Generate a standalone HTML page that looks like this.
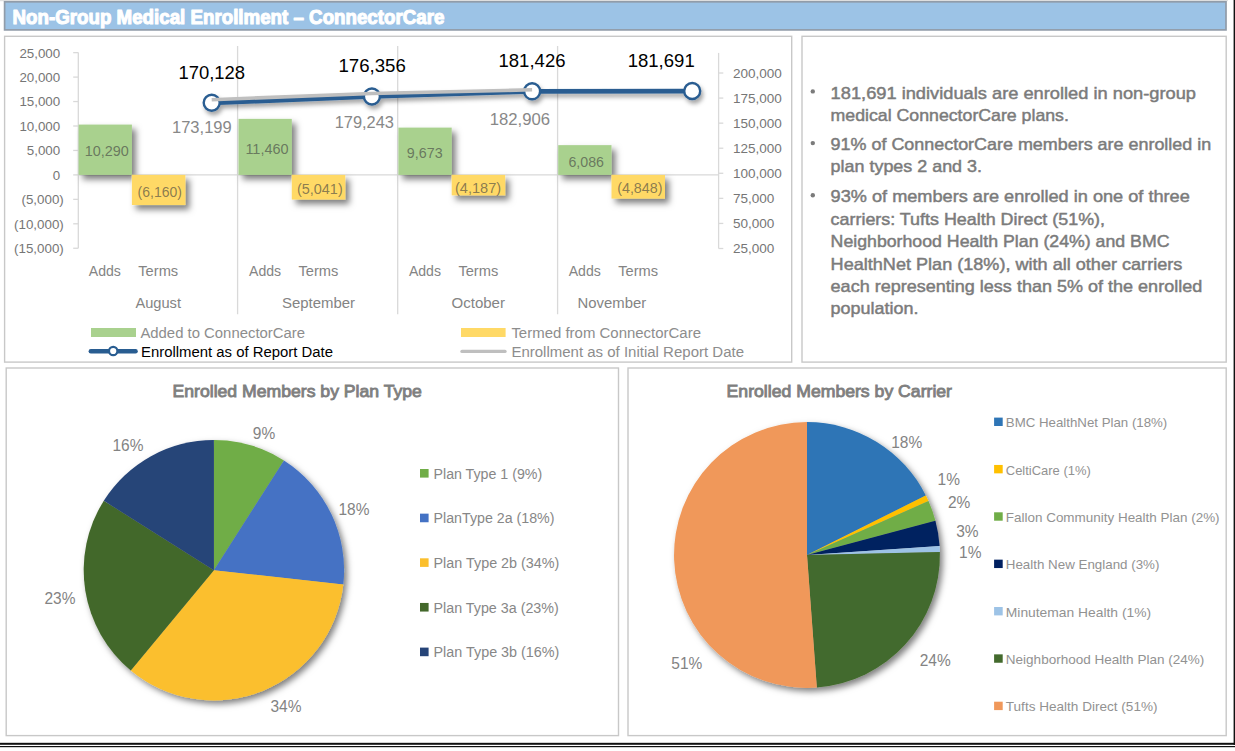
<!DOCTYPE html>
<html><head><meta charset="utf-8"><style>
html,body{margin:0;padding:0;background:#fff;width:1235px;height:751px;overflow:hidden}
svg{display:block;font-family:"Liberation Sans", sans-serif}
</style></head><body>
<svg width="1235" height="751" viewBox="0 0 1235 751">
<defs>
<filter id="bsh" x="-20%" y="-20%" width="150%" height="150%"><feDropShadow dx="4" dy="4.5" stdDeviation="3" flood-color="#000" flood-opacity="0.5"/></filter>
<filter id="lsh" x="-20%" y="-50%" width="150%" height="250%"><feDropShadow dx="2" dy="3.5" stdDeviation="2" flood-color="#000" flood-opacity="0.35"/></filter>
<filter id="psh" x="-20%" y="-20%" width="150%" height="150%"><feDropShadow dx="3" dy="3.5" stdDeviation="3.2" flood-color="#000" flood-opacity="0.5"/></filter>
</defs>
<rect x="0.00" y="0.00" width="1228.00" height="1.20" fill="#e2e2e2"/>
<rect x="4.60" y="1.80" width="1221.40" height="28.10" fill="#9cc3e6" stroke="#919ca9" stroke-width="1.7"/>
<text x="12.6" y="23.9" font-size="20" fill="#ffffff" font-weight="bold" textLength="431.8" lengthAdjust="spacingAndGlyphs" stroke="#ffffff" stroke-width="1.1" stroke-linejoin="round">Non-Group Medical Enrollment – ConnectorCare</text>
<rect x="4.60" y="36.30" width="787.10" height="325.80" fill="#ffffff" stroke="#c8c8c8" stroke-width="1.4"/>
<rect x="802.00" y="36.30" width="424.20" height="325.80" fill="#ffffff" stroke="#c8c8c8" stroke-width="1.4"/>
<rect x="6.20" y="368.00" width="612.30" height="367.60" fill="#ffffff" stroke="#c8c8c8" stroke-width="1.4"/>
<rect x="628.00" y="368.00" width="598.20" height="367.60" fill="#ffffff" stroke="#c8c8c8" stroke-width="1.4"/>
<rect x="0.00" y="742.80" width="1235.00" height="2.00" fill="#111111"/>
<rect x="0.00" y="746.00" width="1235.00" height="1.20" fill="#111111"/>
<rect x="1233.60" y="0.00" width="1.40" height="745.00" fill="#111111"/>
<line x1="237.60" y1="46.00" x2="237.60" y2="314.30" stroke="#d9d9d9" stroke-width="1.3"/>
<line x1="397.70" y1="46.00" x2="397.70" y2="314.30" stroke="#d9d9d9" stroke-width="1.3"/>
<line x1="557.60" y1="46.00" x2="557.60" y2="314.30" stroke="#d9d9d9" stroke-width="1.3"/>
<line x1="78.30" y1="52.60" x2="78.30" y2="248.30" stroke="#d9d9d9" stroke-width="1.3"/>
<line x1="73.20" y1="248.25" x2="78.30" y2="248.25" stroke="#d9d9d9" stroke-width="1.3"/>
<line x1="73.20" y1="223.80" x2="78.30" y2="223.80" stroke="#d9d9d9" stroke-width="1.3"/>
<line x1="73.20" y1="199.35" x2="78.30" y2="199.35" stroke="#d9d9d9" stroke-width="1.3"/>
<line x1="73.20" y1="174.90" x2="78.30" y2="174.90" stroke="#d9d9d9" stroke-width="1.3"/>
<line x1="73.20" y1="150.45" x2="78.30" y2="150.45" stroke="#d9d9d9" stroke-width="1.3"/>
<line x1="73.20" y1="126.00" x2="78.30" y2="126.00" stroke="#d9d9d9" stroke-width="1.3"/>
<line x1="73.20" y1="101.55" x2="78.30" y2="101.55" stroke="#d9d9d9" stroke-width="1.3"/>
<line x1="73.20" y1="77.10" x2="78.30" y2="77.10" stroke="#d9d9d9" stroke-width="1.3"/>
<line x1="73.20" y1="52.65" x2="78.30" y2="52.65" stroke="#d9d9d9" stroke-width="1.3"/>
<line x1="718.60" y1="52.90" x2="718.60" y2="248.50" stroke="#d9d9d9" stroke-width="1.3"/>
<line x1="718.60" y1="248.50" x2="723.30" y2="248.50" stroke="#d9d9d9" stroke-width="1.3"/>
<line x1="718.60" y1="223.43" x2="723.30" y2="223.43" stroke="#d9d9d9" stroke-width="1.3"/>
<line x1="718.60" y1="198.36" x2="723.30" y2="198.36" stroke="#d9d9d9" stroke-width="1.3"/>
<line x1="718.60" y1="173.29" x2="723.30" y2="173.29" stroke="#d9d9d9" stroke-width="1.3"/>
<line x1="718.60" y1="148.22" x2="723.30" y2="148.22" stroke="#d9d9d9" stroke-width="1.3"/>
<line x1="718.60" y1="123.15" x2="723.30" y2="123.15" stroke="#d9d9d9" stroke-width="1.3"/>
<line x1="718.60" y1="98.08" x2="723.30" y2="98.08" stroke="#d9d9d9" stroke-width="1.3"/>
<line x1="718.60" y1="73.01" x2="723.30" y2="73.01" stroke="#d9d9d9" stroke-width="1.3"/>
<line x1="78.30" y1="174.90" x2="718.60" y2="174.90" stroke="#d9d9d9" stroke-width="1.3"/>
<text x="60.2" y="57.5" font-size="13.5" fill="#767676" text-anchor="end" textLength="40.8" lengthAdjust="spacingAndGlyphs">25,000</text>
<text x="60.2" y="81.9" font-size="13.5" fill="#767676" text-anchor="end" textLength="40.8" lengthAdjust="spacingAndGlyphs">20,000</text>
<text x="60.2" y="106.3" font-size="13.5" fill="#767676" text-anchor="end" textLength="40.8" lengthAdjust="spacingAndGlyphs">15,000</text>
<text x="60.2" y="130.8" font-size="13.5" fill="#767676" text-anchor="end" textLength="40.8" lengthAdjust="spacingAndGlyphs">10,000</text>
<text x="60.2" y="155.2" font-size="13.5" fill="#767676" text-anchor="end" textLength="33.4" lengthAdjust="spacingAndGlyphs">5,000</text>
<text x="60.2" y="179.7" font-size="13.5" fill="#767676" text-anchor="end" textLength="7.4" lengthAdjust="spacingAndGlyphs">0</text>
<text x="63.8" y="204.2" font-size="13.5" fill="#767676" text-anchor="end" textLength="42.3" lengthAdjust="spacingAndGlyphs">(5,000)</text>
<text x="63.8" y="228.6" font-size="13.5" fill="#767676" text-anchor="end" textLength="49.7" lengthAdjust="spacingAndGlyphs">(10,000)</text>
<text x="63.8" y="253.1" font-size="13.5" fill="#767676" text-anchor="end" textLength="49.7" lengthAdjust="spacingAndGlyphs">(15,000)</text>
<text x="733.0" y="253.3" font-size="13.5" fill="#767676" textLength="41.4" lengthAdjust="spacingAndGlyphs">25,000</text>
<text x="733.0" y="228.2" font-size="13.5" fill="#767676" textLength="41.4" lengthAdjust="spacingAndGlyphs">50,000</text>
<text x="733.0" y="203.2" font-size="13.5" fill="#767676" textLength="41.4" lengthAdjust="spacingAndGlyphs">75,000</text>
<text x="733.0" y="178.1" font-size="13.5" fill="#767676" textLength="48.9" lengthAdjust="spacingAndGlyphs">100,000</text>
<text x="733.0" y="153.0" font-size="13.5" fill="#767676" textLength="48.9" lengthAdjust="spacingAndGlyphs">125,000</text>
<text x="733.0" y="128.0" font-size="13.5" fill="#767676" textLength="48.9" lengthAdjust="spacingAndGlyphs">150,000</text>
<text x="733.0" y="102.9" font-size="13.5" fill="#767676" textLength="48.9" lengthAdjust="spacingAndGlyphs">175,000</text>
<text x="733.0" y="77.8" font-size="13.5" fill="#767676" textLength="48.9" lengthAdjust="spacingAndGlyphs">200,000</text>
<g filter="url(#bsh)">
<rect x="78.60" y="124.58" width="53.30" height="50.32" fill="#a9d18e"/>
<rect x="131.90" y="174.90" width="53.50" height="30.12" fill="#ffd966"/>
<rect x="238.50" y="118.86" width="53.30" height="56.04" fill="#a9d18e"/>
<rect x="291.80" y="174.90" width="53.50" height="24.65" fill="#ffd966"/>
<rect x="398.40" y="127.60" width="53.30" height="47.30" fill="#a9d18e"/>
<rect x="451.70" y="174.90" width="53.50" height="20.47" fill="#ffd966"/>
<rect x="558.20" y="145.14" width="53.30" height="29.76" fill="#a9d18e"/>
<rect x="611.50" y="174.90" width="53.50" height="23.71" fill="#ffd966"/>
</g>
<text x="84.8" y="156.2" font-size="14" fill="#404040" fill-opacity="0.62" font-weight="normal" textLength="44.1" lengthAdjust="spacingAndGlyphs">10,290</text>
<text x="245.4" y="153.9" font-size="14" fill="#404040" fill-opacity="0.62" font-weight="normal" textLength="43.2" lengthAdjust="spacingAndGlyphs">11,460</text>
<text x="406.8" y="157.9" font-size="14" fill="#404040" fill-opacity="0.62" font-weight="normal" textLength="35.8" lengthAdjust="spacingAndGlyphs">9,673</text>
<text x="568.4" y="166.5" font-size="14" fill="#404040" fill-opacity="0.62" font-weight="normal" textLength="35.6" lengthAdjust="spacingAndGlyphs">6,086</text>
<text x="137.6" y="197.0" font-size="14" fill="#404040" fill-opacity="0.62" font-weight="normal" textLength="44.4" lengthAdjust="spacingAndGlyphs">(6,160)</text>
<text x="297.0" y="193.7" font-size="14" fill="#404040" fill-opacity="0.62" font-weight="normal" textLength="45.7" lengthAdjust="spacingAndGlyphs">(5,041)</text>
<text x="455.0" y="193.0" font-size="14" fill="#404040" fill-opacity="0.62" font-weight="normal" textLength="46.1" lengthAdjust="spacingAndGlyphs">(4,187)</text>
<text x="617.2" y="192.9" font-size="14" fill="#404040" fill-opacity="0.62" font-weight="normal" textLength="45.3" lengthAdjust="spacingAndGlyphs">(4,848)</text>
<text x="88.8" y="275.9" font-size="14" fill="#848484" font-weight="normal" textLength="32.1" lengthAdjust="spacingAndGlyphs">Adds</text>
<text x="138.3" y="275.9" font-size="14" fill="#848484" font-weight="normal" textLength="39.9" lengthAdjust="spacingAndGlyphs">Terms</text>
<text x="249.0" y="275.9" font-size="14" fill="#848484" font-weight="normal" textLength="32.1" lengthAdjust="spacingAndGlyphs">Adds</text>
<text x="298.5" y="275.9" font-size="14" fill="#848484" font-weight="normal" textLength="39.9" lengthAdjust="spacingAndGlyphs">Terms</text>
<text x="408.9" y="275.9" font-size="14" fill="#848484" font-weight="normal" textLength="32.1" lengthAdjust="spacingAndGlyphs">Adds</text>
<text x="458.4" y="275.9" font-size="14" fill="#848484" font-weight="normal" textLength="39.9" lengthAdjust="spacingAndGlyphs">Terms</text>
<text x="568.7" y="275.9" font-size="14" fill="#848484" font-weight="normal" textLength="32.1" lengthAdjust="spacingAndGlyphs">Adds</text>
<text x="618.2" y="275.9" font-size="14" fill="#848484" font-weight="normal" textLength="39.9" lengthAdjust="spacingAndGlyphs">Terms</text>
<text x="135.4" y="307.7" font-size="14" fill="#848484" font-weight="normal" textLength="45.6" lengthAdjust="spacingAndGlyphs">August</text>
<text x="282.0" y="307.7" font-size="14" fill="#848484" font-weight="normal" textLength="73.0" lengthAdjust="spacingAndGlyphs">September</text>
<text x="451.5" y="307.7" font-size="14" fill="#848484" font-weight="normal" textLength="53.5" lengthAdjust="spacingAndGlyphs">October</text>
<text x="577.6" y="307.7" font-size="14" fill="#848484" font-weight="normal" textLength="68.6" lengthAdjust="spacingAndGlyphs">November</text>
<g filter="url(#lsh)">
<polyline points="211.7,102.80 371.9,96.47 532.1,91.32 692.2,91.05" fill="none" stroke="#295d91" stroke-width="4.8" stroke-linejoin="round"/>
<circle cx="211.7" cy="102.80" r="8.0" fill="#ffffff" stroke="#295d91" stroke-width="2.4"/>
<circle cx="371.9" cy="96.47" r="8.0" fill="#ffffff" stroke="#295d91" stroke-width="2.4"/>
<circle cx="532.1" cy="91.32" r="8.0" fill="#ffffff" stroke="#295d91" stroke-width="2.4"/>
<circle cx="692.2" cy="91.05" r="8.0" fill="#ffffff" stroke="#295d91" stroke-width="2.4"/>
<polyline points="211.7,99.68 371.9,93.54 532.1,89.82" fill="none" stroke="#bfbfbf" stroke-width="3.6" stroke-linejoin="round"/>
</g>
<text x="178.5" y="79.0" font-size="18.5" fill="#000000" font-weight="normal" textLength="66.6" lengthAdjust="spacingAndGlyphs">170,128</text>
<text x="338.4" y="72.3" font-size="18.5" fill="#000000" font-weight="normal" textLength="67.4" lengthAdjust="spacingAndGlyphs">176,356</text>
<text x="498.5" y="67.2" font-size="18.5" fill="#000000" font-weight="normal" textLength="67.0" lengthAdjust="spacingAndGlyphs">181,426</text>
<text x="627.7" y="67.2" font-size="18.5" fill="#000000" font-weight="normal" textLength="67.0" lengthAdjust="spacingAndGlyphs">181,691</text>
<text x="172.0" y="133.0" font-size="16.5" fill="#888888" font-weight="normal" textLength="59.7" lengthAdjust="spacingAndGlyphs">173,199</text>
<text x="334.7" y="127.8" font-size="16.5" fill="#888888" font-weight="normal" textLength="59.3" lengthAdjust="spacingAndGlyphs">179,243</text>
<text x="489.7" y="124.5" font-size="16.5" fill="#888888" font-weight="normal" textLength="60.3" lengthAdjust="spacingAndGlyphs">182,906</text>
<rect x="91.00" y="328.00" width="45.00" height="9.00" fill="#a9d18e"/>
<text x="140.4" y="337.6" font-size="14" fill="#8d8d8d" font-weight="normal" textLength="164.6" lengthAdjust="spacingAndGlyphs">Added to ConnectorCare</text>
<rect x="461.00" y="328.00" width="44.60" height="9.00" fill="#ffd966"/>
<text x="511.4" y="337.6" font-size="14" fill="#8d8d8d" font-weight="normal" textLength="189.6" lengthAdjust="spacingAndGlyphs">Termed from ConnectorCare</text>
<line x1="90.80" y1="351.20" x2="135.60" y2="351.20" stroke="#295d91" stroke-width="4.4" stroke-linecap="round"/>
<circle cx="113.2" cy="351.0" r="4.2" fill="#fff" stroke="#295d91" stroke-width="2.2"/>
<text x="141.0" y="357.2" font-size="14" fill="#000000" font-weight="normal" textLength="192.0" lengthAdjust="spacingAndGlyphs">Enrollment as of Report Date</text>
<line x1="462.00" y1="351.40" x2="505.00" y2="351.40" stroke="#bfbfbf" stroke-width="3.4" stroke-linecap="round"/>
<text x="511.4" y="357.2" font-size="14" fill="#8d8d8d" font-weight="normal" textLength="232.6" lengthAdjust="spacingAndGlyphs">Enrollment as of Initial Report Date</text>
<circle cx="812.8" cy="91.4" r="2.2" fill="#7b7b7b"/>
<text x="830.6" y="98.6" font-size="16.2" fill="#7b7b7b" font-weight="normal" textLength="365.4" lengthAdjust="spacingAndGlyphs" stroke="#7b7b7b" stroke-width="0.45">181,691 individuals are enrolled in non-group</text>
<text x="830.6" y="120.6" font-size="16.2" fill="#7b7b7b" font-weight="normal" textLength="238.3" lengthAdjust="spacingAndGlyphs" stroke="#7b7b7b" stroke-width="0.45">medical ConnectorCare plans.</text>
<circle cx="812.8" cy="143.1" r="2.2" fill="#7b7b7b"/>
<text x="830.6" y="150.3" font-size="16.2" fill="#7b7b7b" font-weight="normal" textLength="380.6" lengthAdjust="spacingAndGlyphs" stroke="#7b7b7b" stroke-width="0.45">91% of ConnectorCare members are enrolled in</text>
<text x="830.6" y="172.3" font-size="16.2" fill="#7b7b7b" font-weight="normal" textLength="151.4" lengthAdjust="spacingAndGlyphs" stroke="#7b7b7b" stroke-width="0.45">plan types 2 and 3.</text>
<circle cx="812.8" cy="195.2" r="2.2" fill="#7b7b7b"/>
<text x="830.6" y="202.4" font-size="16.2" fill="#7b7b7b" font-weight="normal" textLength="359.2" lengthAdjust="spacingAndGlyphs" stroke="#7b7b7b" stroke-width="0.45">93% of members are enrolled in one of three</text>
<text x="830.6" y="224.9" font-size="16.2" fill="#7b7b7b" font-weight="normal" textLength="274.4" lengthAdjust="spacingAndGlyphs" stroke="#7b7b7b" stroke-width="0.45">carriers: Tufts Health Direct (51%),</text>
<text x="830.6" y="247.3" font-size="16.2" fill="#7b7b7b" font-weight="normal" textLength="338.9" lengthAdjust="spacingAndGlyphs" stroke="#7b7b7b" stroke-width="0.45">Neighborhood Health Plan (24%) and BMC</text>
<text x="830.6" y="269.6" font-size="16.2" fill="#7b7b7b" font-weight="normal" textLength="351.7" lengthAdjust="spacingAndGlyphs" stroke="#7b7b7b" stroke-width="0.45">HealthNet Plan (18%), with all other carriers</text>
<text x="830.6" y="292.1" font-size="16.2" fill="#7b7b7b" font-weight="normal" textLength="371.6" lengthAdjust="spacingAndGlyphs" stroke="#7b7b7b" stroke-width="0.45">each representing less than 5% of the enrolled</text>
<text x="830.6" y="314.2" font-size="16.2" fill="#7b7b7b" font-weight="normal" textLength="87.8" lengthAdjust="spacingAndGlyphs" stroke="#7b7b7b" stroke-width="0.45">population.</text>
<g filter="url(#psh)">
<path d="M213.90,570.20 L213.90,440.00 A130.2,130.2 0 0 1 283.94,460.44 Z" fill="#70ad47"/>
<path d="M213.90,570.20 L283.94,460.44 A130.2,130.2 0 0 1 343.30,584.57 Z" fill="#4472c4"/>
<path d="M213.90,570.20 L343.30,584.57 A130.2,130.2 0 0 1 130.78,670.42 Z" fill="#fbbf2d"/>
<path d="M213.90,570.20 L130.78,670.42 A130.2,130.2 0 0 1 103.79,500.71 Z" fill="#43682b"/>
<path d="M213.90,570.20 L103.79,500.71 A130.2,130.2 0 0 1 213.90,440.00 Z" fill="#264478"/>
</g>
<text x="172.5" y="396.8" font-size="16.5" fill="#7f7f7f" font-weight="normal" textLength="249.4" lengthAdjust="spacingAndGlyphs" stroke="#7f7f7f" stroke-width="0.85">Enrolled Members by Plan Type</text>
<g font-size="16.5" fill="#838383" text-anchor="middle">
<text x="264" y="438.5" textLength="22.4" lengthAdjust="spacingAndGlyphs">9%</text>
<text x="354" y="514.5" textLength="31.0" lengthAdjust="spacingAndGlyphs">18%</text>
<text x="286" y="711.5" textLength="31.0" lengthAdjust="spacingAndGlyphs">34%</text>
<text x="60" y="604.0" textLength="31.0" lengthAdjust="spacingAndGlyphs">23%</text>
<text x="128" y="450.5" textLength="31.0" lengthAdjust="spacingAndGlyphs">16%</text>
</g>
<rect x="420.00" y="469.00" width="8.60" height="8.60" fill="#70ad47"/>
<text x="433.5" y="478.5" font-size="14" fill="#878787" font-weight="normal" textLength="108.7" lengthAdjust="spacingAndGlyphs">Plan Type 1 (9%)</text>
<rect x="420.00" y="513.65" width="8.60" height="8.60" fill="#4472c4"/>
<text x="433.5" y="523.2" font-size="14" fill="#878787" font-weight="normal" textLength="121.0" lengthAdjust="spacingAndGlyphs">PlanType 2a (18%)</text>
<rect x="420.00" y="558.30" width="8.60" height="8.60" fill="#fbbf2d"/>
<text x="433.5" y="567.8" font-size="14" fill="#878787" font-weight="normal" textLength="125.9" lengthAdjust="spacingAndGlyphs">Plan Type 2b (34%)</text>
<rect x="420.00" y="602.95" width="8.60" height="8.60" fill="#43682b"/>
<text x="433.5" y="612.5" font-size="14" fill="#878787" font-weight="normal" textLength="125.3" lengthAdjust="spacingAndGlyphs">Plan Type 3a (23%)</text>
<rect x="420.00" y="647.60" width="8.60" height="8.60" fill="#264478"/>
<text x="433.5" y="657.1" font-size="14" fill="#878787" font-weight="normal" textLength="125.9" lengthAdjust="spacingAndGlyphs">Plan Type 3b (16%)</text>
<g filter="url(#psh)">
<path d="M807.00,555.00 L807.00,422.10 A132.9,132.9 0 0 1 925.83,495.48 Z" fill="#2e75b6"/>
<path d="M807.00,555.00 L925.83,495.48 A132.9,132.9 0 0 1 928.47,501.07 Z" fill="#ffc000"/>
<path d="M807.00,555.00 L928.47,501.07 A132.9,132.9 0 0 1 935.39,520.66 Z" fill="#70ad47"/>
<path d="M807.00,555.00 L935.39,520.66 A132.9,132.9 0 0 1 939.59,545.91 Z" fill="#002060"/>
<path d="M807.00,555.00 L939.59,545.91 A132.9,132.9 0 0 1 939.87,551.99 Z" fill="#9dc3e6"/>
<path d="M807.00,555.00 L939.87,551.99 A132.9,132.9 0 0 1 816.84,687.53 Z" fill="#436a2d"/>
<path d="M807.00,555.00 L816.84,687.53 A132.9,132.9 0 1 1 807.00,422.10 Z" fill="#f0985a"/>
</g>
<text x="726.6" y="396.8" font-size="16.5" fill="#7f7f7f" font-weight="normal" textLength="225.4" lengthAdjust="spacingAndGlyphs" stroke="#7f7f7f" stroke-width="0.85">Enrolled Members by Carrier</text>
<g font-size="16.5" fill="#838383" text-anchor="middle">
<text x="906.7" y="447.5" textLength="31.0" lengthAdjust="spacingAndGlyphs">18%</text>
<text x="948.8" y="484.7" textLength="22.4" lengthAdjust="spacingAndGlyphs">1%</text>
<text x="959.2" y="507.5" textLength="22.4" lengthAdjust="spacingAndGlyphs">2%</text>
<text x="967.4" y="536.7" textLength="22.4" lengthAdjust="spacingAndGlyphs">3%</text>
<text x="970.3" y="558.2" textLength="22.4" lengthAdjust="spacingAndGlyphs">1%</text>
<text x="935.2" y="666.3" textLength="31.0" lengthAdjust="spacingAndGlyphs">24%</text>
<text x="686.8" y="668.8" textLength="31.0" lengthAdjust="spacingAndGlyphs">51%</text>
</g>
<rect x="994.10" y="417.60" width="8.60" height="8.40" fill="#2e75b6"/>
<text x="1005.8" y="427.2" font-size="13" fill="#929292" font-weight="normal" textLength="161.5" lengthAdjust="spacingAndGlyphs">BMC HealthNet Plan (18%)</text>
<rect x="994.10" y="464.95" width="8.60" height="8.40" fill="#ffc000"/>
<text x="1005.8" y="474.6" font-size="13" fill="#929292" font-weight="normal" textLength="85.0" lengthAdjust="spacingAndGlyphs">CeltiCare (1%)</text>
<rect x="994.10" y="512.30" width="8.60" height="8.40" fill="#70ad47"/>
<text x="1005.8" y="521.9" font-size="13" fill="#929292" font-weight="normal" textLength="213.8" lengthAdjust="spacingAndGlyphs">Fallon Community Health Plan (2%)</text>
<rect x="994.10" y="559.65" width="8.60" height="8.40" fill="#002060"/>
<text x="1005.8" y="569.2" font-size="13" fill="#929292" font-weight="normal" textLength="153.6" lengthAdjust="spacingAndGlyphs">Health New England (3%)</text>
<rect x="994.10" y="607.00" width="8.60" height="8.40" fill="#9dc3e6"/>
<text x="1005.8" y="616.6" font-size="13" fill="#929292" font-weight="normal" textLength="145.3" lengthAdjust="spacingAndGlyphs">Minuteman Health (1%)</text>
<rect x="994.10" y="654.35" width="8.60" height="8.40" fill="#436a2d"/>
<text x="1005.8" y="663.9" font-size="13" fill="#929292" font-weight="normal" textLength="198.5" lengthAdjust="spacingAndGlyphs">Neighborhood Health Plan (24%)</text>
<rect x="994.10" y="701.70" width="8.60" height="8.40" fill="#f0985a"/>
<text x="1005.8" y="711.3" font-size="13" fill="#929292" font-weight="normal" textLength="151.7" lengthAdjust="spacingAndGlyphs">Tufts Health Direct (51%)</text>
</svg>
</body></html>
